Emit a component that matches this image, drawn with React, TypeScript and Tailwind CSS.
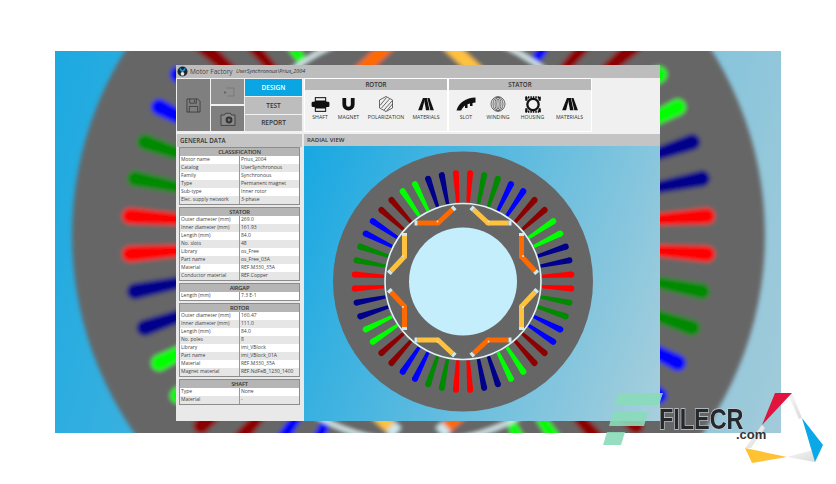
import React from 'react';

const SLOT_COLORS = ['#ff0000', '#008a00', '#0000ff', '#8b0000', '#00ff00', '#00008b'];

const TIP = '#cfe9ee';

// one arm of a V magnet pair; mirrored for the yellow ones
const MagnetArm: React.FC<{ color: string; flip?: boolean; deg: number }> = ({ color, flip, deg }) => (
  <g transform={`rotate(${deg}) scale(1 ${flip ? -1 : 1})`}>
    <line x1="58.5" y1="-25" x2="58.5" y2="-45.5" stroke={color} strokeWidth="5" />
    <line x1="72" y1="-10.5" x2="58.5" y2="-25" stroke={color} strokeWidth="5" />
    <circle cx="58.5" cy="-25" r="2.5" fill={color} />
    <line x1="58.5" y1="-45.5" x2="58.5" y2="-48.5" stroke={TIP} strokeWidth="5" />
    <line x1="72" y1="-10.5" x2="74.2" y2="-8.1" stroke={TIP} strokeWidth="5" />
    <circle cx="60" cy="-25.5" r="1" fill={TIP} />
  </g>
);

// outer ring + 48 slots + magnets, drawn around 0,0 with stator radius 130
const Motor: React.FC = () => {
  const slots = Array.from({ length: 48 }, (_, i) => {
    const deg = -3.75 + i * 7.5;
    const color = SLOT_COLORS[Math.floor(i / 2) % 6];
    return (
      <g key={i} transform={`rotate(${deg})`}>
        <polygon points="79,-1.7 108.5,-3 108.5,3 79,1.7" fill={color} />
        <circle cx="108.5" cy="0" r="3" fill={color} />
      </g>
    );
  });

  return (
    <g>
      <circle r="130" fill="#666666" />
      {slots}
      <circle r="78" fill="#666666" stroke="#dff3f5" strokeWidth="1.6" />
      {[0, 90, 180, 270].map((deg) => (
        <React.Fragment key={deg}>
          <MagnetArm color="#ff6a00" deg={deg} />
          <MagnetArm color="#ffc23f" deg={deg} flip />
        </React.Fragment>
      ))}
      <circle r="54" fill="#c4eefb" />
    </g>
  );
};

const Materials = () => (
  <svg viewBox="0 0 20 16" className="h-[14px] w-[18px]">
    <polygon points="1,15 6.5,1 9,1 5.5,15" fill="#111" />
    <polygon points="7.5,1 11,1 14,15 10,15" fill="#111" />
    <polygon points="11.5,1 14,1 19,15 15,15" fill="#111" />
  </svg>
);

const ShaftIcon = () => (
  <svg viewBox="0 0 20 16" className="h-[15px] w-[19px]">
    <rect x="4.5" y="0.7" width="11" height="14.6" fill="none" stroke="#111" strokeWidth="1.1" />
    <rect x="0.5" y="5" width="19" height="5.6" rx="1.4" fill="#111" />
    <rect x="4" y="3.6" width="12" height="8.6" rx="1" fill="#111" />
  </svg>
);

const MagnetIcon = () => (
  <svg viewBox="0 0 16 16" className="h-[15px] w-[15px]">
    <path d="M1.5 1v7a6.5 6.5 0 0 0 13 0V1h-4v7a2.5 2.5 0 0 1-5 0V1z" fill="#111" />
  </svg>
);

const PolarizationIcon = () => (
  <svg viewBox="0 0 16 16" className="h-[16px] w-[16px]" fill="none" stroke="#444" strokeWidth="0.8">
    <polygon points="8,0.5 14.5,4 14.5,12 8,15.5 1.5,12 1.5,4" />
    <path d="M2 9.5 8.5 1.5M3.5 12 11.5 3M6 14 14 5M9 14.5 14.5 8" />
  </svg>
);

const SlotIcon = () => (
  <svg viewBox="0 0 20 14" className="h-[14px] w-[20px]">
    <path d="M0.5 13.5C2.5 6 10 0.5 19.5 0.5V5.5L16.5 6V9H14V6.4L11.5 7.2V11H9V8.4C7.5 9.5 6 11.5 5.2 13.5z" fill="#111" />
  </svg>
);

const WindingIcon = () => (
  <svg viewBox="0 0 16 16" className="h-[16px] w-[16px]" fill="none" stroke="#444" strokeWidth="0.8">
    <ellipse cx="8" cy="8" rx="7" ry="7.3" />
    <ellipse cx="8" cy="8" rx="5" ry="7" />
    <ellipse cx="8" cy="8" rx="3" ry="6.4" />
    <ellipse cx="8" cy="8" rx="1.2" ry="5" />
  </svg>
);

const HousingIcon = () => (
  <svg viewBox="0 0 18 18" className="h-[17px] w-[18px]">
    <circle cx="9" cy="9" r="6" fill="none" stroke="#111" strokeWidth="2.4" />
    <path d="M1 1.5h16M1 16.5h16" stroke="#111" strokeWidth="2.4" strokeDasharray="1.6 1" />
    <path d="M2 1v4M16 1v4M2 13v4M16 13v4" stroke="#111" strokeWidth="2.4" />
  </svg>
);

const ToolItem: React.FC<{ label: string; className: string; children: React.ReactNode }> = ({ label, className, children }) => (
  <div className={`flex flex-col items-center ${className}`}>
    <div className="flex h-[18px] items-center justify-center">{children}</div>
    <span className="mt-[1px] text-[5.2px] leading-[7px] whitespace-nowrap text-[#333]">{label}</span>
  </div>
);

const ToolGroup: React.FC<{ title: string; className: string; children: React.ReactNode }> = ({ title, className, children }) => (
  <div className={`flex flex-col ring-1 ring-white ${className}`}>
    <div className="flex h-[11px] items-center justify-center bg-[#b9b9b9] text-[6.2px] font-semibold text-[#333]">{title}</div>
    <div className="flex flex-1 items-start bg-[#f1f1f1] pt-[5px]">{children}</div>
  </div>
);

interface Section {
  title: string;
  rows: [string, string][];
}

const sections: Section[] = [
  {
    title: 'CLASSIFICATION',
    rows: [
      ['Motor name', 'Prius_2004'],
      ['Catalog', 'UserSynchronous'],
      ['Family', 'Synchronous'],
      ['Type', 'Permanent magnet'],
      ['Sub-type', 'Inner rotor'],
      ['Elec. supply network', '3-phase'],
    ],
  },
  {
    title: 'STATOR',
    rows: [
      ['Outer diameter (mm)', '269.0'],
      ['Inner diameter (mm)', '161.93'],
      ['Length (mm)', '84.0'],
      ['No. slots', '48'],
      ['Library', 'os_Free'],
      ['Part name', 'os_Free_03A'],
      ['Material', 'REF.M330_35A'],
      ['Conductor material', 'REF.Copper'],
    ],
  },
  { title: 'AIRGAP', rows: [['Length (mm)', '7.3 E-1']] },
  {
    title: 'ROTOR',
    rows: [
      ['Outer diameter (mm)', '160.47'],
      ['Inner diameter (mm)', '111.0'],
      ['Length (mm)', '84.0'],
      ['No. poles', '8'],
      ['Library', 'imi_VBlock'],
      ['Part name', 'imi_VBlock_01A'],
      ['Material', 'REF.M330_35A'],
      ['Magnet material', 'REF.NdFeB_1230_1400'],
    ],
  },
  {
    title: 'SHAFT',
    rows: [
      ['Type', 'None'],
      ['Material', '-'],
    ],
  },
];

const DataBlock: React.FC<{ section: Section }> = ({ section }) => (
  <div className="border border-[#8c8c8c]">
    <div className="flex h-[8px] items-center justify-center bg-[#b5b5b5] text-[5.8px] font-semibold tracking-[-0.2px] text-[#333]">{section.title}</div>
    {section.rows.map(([name, value], i) => (
      <div key={name} className={`flex h-[8px] items-center text-[5px] text-[#444] ${i % 2 === 0 ? 'bg-white' : 'bg-[#e6e6e6]'}`}>
        <span className="w-[59px] pl-px whitespace-nowrap">{name}</span>
        <span className="flex-1 border-l border-[#999] pl-px whitespace-nowrap">{value}</span>
      </div>
    ))}
  </div>
);

export default function App() {
  return (
    <div className="relative h-[484px] w-[836px] overflow-hidden bg-white font-['Open_Sans',sans-serif]">
      <div className="absolute top-[51px] left-[55px] h-[382px] w-[726px] overflow-hidden bg-[linear-gradient(105deg,#1ca9e1,#a2cbda)]">
        {/* blown-up blurred copy of the motor behind the window */}
        <svg className="absolute inset-0 h-full w-full" viewBox="0 0 726 382">
          <defs>
            <filter id="bgblur" x="-10%" y="-10%" width="120%" height="120%">
              <feGaussianBlur stdDeviation="0.7" />
            </filter>
          </defs>
          <g filter="url(#bgblur)" transform="translate(363.5 184) scale(2.665)">
            <Motor />
          </g>
        </svg>
      </div>

      {/* application window */}
      <div className="absolute top-[65px] left-[176px] flex h-[356px] w-[484px] flex-col bg-[#e9e9e9]">
        <div className="flex h-[13px] items-center bg-[#bdbdbd] pl-px">
          <svg viewBox="0 0 12 12" className="h-[11px] w-[11px]">
            <circle cx="6" cy="6" r="5.5" fill="#1d2733" />
            <path d="M3 1.5 6 5l3-3.5V4L6 7 3 4z" fill="#1aa3e0" />
            <circle cx="6" cy="8.5" r="2" fill="#e8e8e8" />
          </svg>
          <span className="ml-[2px] w-[46px] text-[6.5px] whitespace-nowrap text-[#444]">Motor Factory</span>
          <span className="text-[5.4px] whitespace-nowrap text-[#333] italic">UserSynchronous\Prius_2004</span>
        </div>

        <div className="flex h-[56px] bg-[#f0f0f0] pt-px pl-px">
          <div className="flex h-[52px] w-[33px] items-center justify-center bg-[#7f7f7f]">
            <svg viewBox="0 0 16 16" className="h-[15px] w-[15px]" fill="none" stroke="#333" strokeWidth="0.8">
              <path d="M1 1h11.5L15 3.5V15H1z" />
              <path d="M4 1v4.5h7V1M9 2v2.5M3.5 15V9h9v6" />
            </svg>
          </div>
          <div className="ml-px flex h-[52px] w-[33px] flex-col gap-[2px]">
            <div className="flex h-[25px] items-center justify-center bg-[#8f8f8f]">
              <svg viewBox="0 0 16 10" className="h-[10px] w-[16px]" fill="none" stroke="#666" strokeWidth="0.5">
                <path d="M6 1h8v8H7" />
                <path d="M5 4v3M3.8 5.5h2.4" stroke="#444" />
              </svg>
            </div>
            <div className="flex h-[25px] items-center justify-center bg-[#7f7f7f]">
              <svg viewBox="0 0 16 14" className="h-[14px] w-[16px]">
                <path d="M1 3h3.5l1-1.7h5l1 1.7H15v10.4H1z" fill="#8a8a8a" stroke="#333" strokeWidth="0.8" />
                <circle cx="9" cy="8" r="3.4" fill="#333" />
                <circle cx="9" cy="8" r="1.4" fill="#777" />
              </svg>
            </div>
          </div>
          <div className="ml-px flex h-[52px] w-[57px] flex-col gap-px text-[6.5px] font-semibold text-[#333]">
            <div className="flex h-[17px] items-center justify-center bg-[#0aa5e3] text-white">DESIGN</div>
            <div className="flex h-[17px] items-center justify-center bg-[#bdbdbd]">TEST</div>
            <div className="flex h-[16px] items-center justify-center bg-[#bdbdbd]">REPORT</div>
          </div>

          <ToolGroup title="ROTOR" className="ml-[3px] h-[52px] w-[142px]">
            <ToolItem label="SHAFT" className="ml-[5px] w-[20px]"><ShaftIcon /></ToolItem>
            <ToolItem label="MAGNET" className="ml-[6.5px] w-[24px]"><MagnetIcon /></ToolItem>
            <ToolItem label="POLARIZATION" className="ml-[6.5px] w-[38px]"><PolarizationIcon /></ToolItem>
            <ToolItem label="MATERIALS" className="ml-[7px] w-[28px]"><Materials /></ToolItem>
          </ToolGroup>
          <ToolGroup title="STATOR" className="ml-[2px] h-[52px] w-[142px]">
            <ToolItem label="SLOT" className="ml-[7px] w-[20px]"><SlotIcon /></ToolItem>
            <ToolItem label="WINDING" className="ml-[10px] w-[24px]"><WindingIcon /></ToolItem>
            <ToolItem label="HOUSING" className="ml-[9.5px] w-[26px]"><HousingIcon /></ToolItem>
            <ToolItem label="MATERIALS" className="ml-[10px] w-[28px]"><Materials /></ToolItem>
          </ToolGroup>
        </div>

        <div className="flex min-h-0 flex-1">
          <div className="ml-px flex w-[125px] flex-col">
            <div className="flex h-[13px] items-center bg-[#c4c4c4] pl-[3px] text-[6.2px] font-semibold text-[#333]">GENERAL DATA</div>
            <div className="flex flex-col gap-[2px] px-[2px]">
              {sections.map((s) => (
                <DataBlock key={s.title} section={s} />
              ))}
            </div>
          </div>
          <div className="ml-[2px] flex flex-1 flex-col">
            <div className="flex h-[12px] items-center bg-[#c4c4c4] pl-[3px] text-[6px] font-semibold text-[#333]">RADIAL VIEW</div>
            <div className="flex-1 bg-[linear-gradient(110deg,#18a8e2,#a8cfdc)]">
              <svg viewBox="0 0 356 274" className="h-full w-full">
                <g transform="translate(159 135)">
                  <Motor />
                </g>
              </svg>
            </div>
          </div>
        </div>
      </div>

      {/* filecr watermark */}
      <svg viewBox="0 0 60 54" className="absolute top-[392px] left-[603px] h-[54px] w-[60px]">
        <polygon points="15,1 60,1 56,13 11,13" fill="#8adcb9" fillOpacity="0.9" />
        <polygon points="10,20 45,20 41,34 6,34" fill="#8adcb9" fillOpacity="0.9" />
        <polygon points="4,40 22,40 18,53 0,53" fill="#8adcb9" fillOpacity="0.9" />
      </svg>
      <svg viewBox="0 0 80 72" className="absolute top-[392px] left-[745px] h-[72px] w-[80px]">
        <defs>
          <linearGradient id="fade" x1="0" y1="0" x2="1" y2="1">
            <stop offset="0" stopColor="#f8f8f8" />
            <stop offset="1" stopColor="#dadada" />
          </linearGradient>
        </defs>
        <polygon points="47,1 57,26 54,27 44,5" fill="url(#fade)" />
        <polygon points="17,33 0,56 6,56 20,36" fill="url(#fade)" />
        <polygon points="42,65 70,70 68,58" fill="url(#fade)" />
        <polygon points="17,33 30,1 47,1" fill="#e0143c" />
        <polygon points="57,26 78,53 70,70" fill="#0aa8e6" />
        <polygon points="0,56 42,65 7,71" fill="#ffc233" />
      </svg>
      <span className="absolute top-[407px] left-[659px] origin-left scale-x-[0.78] text-[30px] leading-[23px] font-bold text-[#25292e] [font-family:'Liberation_Sans',sans-serif] [-webkit-text-stroke:1.5px_#c9ced1] [paint-order:stroke_fill]">
        FILECR
      </span>
      <span className="absolute top-[430px] left-[736px] text-[13px] leading-[10px] font-bold text-[#333] [font-family:'Liberation_Sans',sans-serif]">
        .com
      </span>
    </div>
  );
}
